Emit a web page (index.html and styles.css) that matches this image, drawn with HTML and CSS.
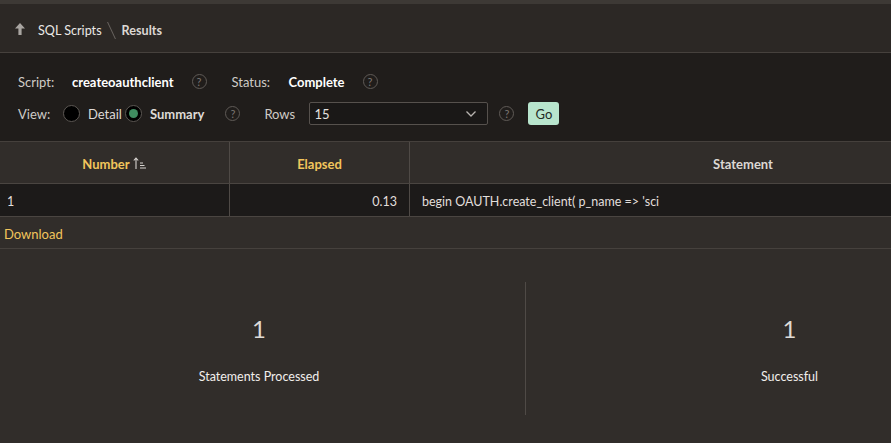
FILE: index.html
```html
<!DOCTYPE html>
<html>
<head>
<meta charset="utf-8">
<link rel="stylesheet" href="styles.css">
</head>
<body>
<div class="page">
  <div class="topstrip"></div>
  <div class="crumbs">
    <svg class="uparrow" width="12" height="14" viewBox="0 0 12 14"><path d="M6 1 L11 6.5 H7.6 V13 H4.4 V6.5 H1 Z" fill="#a9a5a1"/></svg>
    <span class="crumb">SQL Scripts</span>
    <span class="sep"></span>
    <span class="crumb current">Results</span>
  </div>
  <div class="filters">
    <div class="frow">
      <span class="lbl w-script">Script:</span>
      <span class="val">createoauthclient</span>
      <span class="help">?</span>
      <span class="lbl w-status">Status:</span>
      <span class="val">Complete</span>
      <span class="help">?</span>
    </div>
    <div class="frow">
      <span class="lbl w-view">View:</span>
      <span class="radio"></span>
      <span class="rlbl">Detail</span>
      <span class="radio on"><span class="dot"></span></span>
      <span class="rlbl bold">Summary</span>
      <span class="help">?</span>
      <span class="lbl w-rows">Rows</span>
      <span class="select"><span>15</span><svg width="12" height="8" viewBox="0 0 12 8"><path d="M1.5 1.5 L6 6 L10.5 1.5" fill="none" stroke="#b8b4b0" stroke-width="1.3"/></svg></span>
      <span class="help">?</span>
      <span class="go">Go</span>
    </div>
  </div>
  <div class="table">
    <div class="tr thead">
      <div class="td c1">Number <svg class="sort" width="14" height="14" viewBox="0 0 14 14"><path d="M3 13 V2 M0.8 4.5 L3 2 L5.2 4.5" fill="none" stroke="#d8d4d0" stroke-width="1.1"/><path d="M7 7 H10 M7 9.5 H11.5 M7 12 H13" stroke="#d8d4d0" stroke-width="1"/></svg></div>
      <div class="td c2">Elapsed</div>
      <div class="td c3 white">Statement</div>
    </div>
    <div class="tr tbody">
      <div class="td c1 left">1</div>
      <div class="td c2 right">0.13</div>
      <div class="td c3 left">begin OAUTH.create_client( p_name =&gt; 'sci</div>
    </div>
  </div>
  <div class="download"><span>Download</span></div>
  <div class="summary">
    <div class="panel">
      <div class="big">1</div>
      <div class="cap">Statements Processed</div>
    </div>
    <div class="panel divided">
      <div class="big">1</div>
      <div class="cap">Successful</div>
    </div>
  </div>
</div>
</body>
</html>
```
FILE: styles.css
```css
html, body {
  margin: 0;
  padding: 0;
  background: #312d2a;
  overflow: hidden;
}
body {
  font-family: Lato, "Open Sans", sans-serif;
  font-size: 13px;
  color: #e8e5e2;
  width: 891px;
  height: 443px;
}
.page {
  width: 891px;
  overflow: hidden;
}
.topstrip {
  height: 4px;
  background: #3d3935;
}
.crumbs {
  height: 49px;
  background: #2c2825;
  border-bottom: 1px solid #46413d;
  display: flex;
  align-items: center;
  padding-left: 14px;
  box-sizing: border-box;
  padding-top: 4px;
}
.uparrow {
  margin-right: 12px;
  margin-top: -2px;
}
.crumb {
  color: #ebe8e5;
  font-size: 12.6px;
}
.crumb.current {
  font-weight: 700;
  color: #dcd8d4;
}
.sep {
  width: 1px;
  height: 17px;
  background: #6a6561;
  transform: skewX(25deg);
  margin: 0 10px 0 9px;
}
.filters {
  height: 88px;
  background: #201d1b;
  box-sizing: border-box;
  padding: 17px 0 0 18px;
  display: flex;
  flex-direction: column;
  gap: 9px;
}
.frow {
  display: flex;
  align-items: center;
  height: 23px;
}
.lbl {
  color: #cfcbc7;
}
.w-script { width: 54px; }
.w-status { width: 57px; margin-left: 25px; }
.w-view { width: 45px; }
.w-rows { width: 45px; margin-left: 24px; }
.val {
  font-weight: 700;
  color: #ffffff;
}
.help {
  width: 13px;
  height: 13px;
  border: 1.5px solid #5f5a56;
  border-radius: 50%;
  color: #7b7672;
  font-size: 11px;
  display: inline-flex;
  align-items: center;
  justify-content: center;
  margin-left: 18px;
  line-height: 1;
}
.radio {
  width: 15px;
  height: 15px;
  border-radius: 50%;
  border: 1px solid #5c5753;
  background: #000;
  display: inline-flex;
  align-items: center;
  justify-content: center;
  margin-right: 8px;
}
.rlbl {
  color: #dedad6;
}
.radio.on {
  margin-left: 3px;
  margin-right: 8px;
}
.dot {
  width: 9px;
  height: 9px;
  border-radius: 50%;
  background: #3f8c60;
}
.bold {
  font-weight: 700;
}
.frow .bold + .help { margin-left: 21px; }
.select {
  width: 179px;
  height: 23px;
  box-sizing: border-box;
  background: #1a1817;
  border: 1px solid #56514d;
  border-radius: 2px;
  display: flex;
  align-items: center;
  justify-content: space-between;
  padding: 0 10px 0 4px;
  color: #e6e3e0;
}
.select + .help { margin-left: 11px; }
.go {
  width: 31px;
  height: 23px;
  background: #b8e5cd;
  color: #1f2a24;
  border-radius: 3px;
  display: inline-flex;
  align-items: center;
  justify-content: center;
  margin-left: 14px;
  font-size: 13px;
}
.table {
  border-top: 1px solid #45403c;
}
.tr {
  display: flex;
}
.thead {
  height: 41px;
  background: #312d2a;
  border-bottom: 1px solid #4a4541;
  font-weight: 700;
  color: #f2c55c;
}
.tbody {
  height: 32px;
  background: #1c1a19;
  border-bottom: 1px solid #4a4541;
  color: #e2dfdc;
  font-size: 12.5px;
}
.td {
  display: flex;
  align-items: center;
  justify-content: center;
  box-sizing: border-box;
  padding-top: 3px;
}
.c1 { width: 230px; border-right: 1px solid #4f4a46; }
.c2 { width: 180px; border-right: 1px solid #4f4a46; }
.c3 { width: 481px; }
.thead .c3 { padding-left: 185px; }
.white { color: #dcd8d4; }
.left { justify-content: flex-start; padding-left: 7px; }
.c3.left { padding-left: 12px; }
.right { justify-content: flex-end; padding-right: 12px; }
.sort { margin-left: 3px; margin-top: -2px; }
.download {
  height: 32px;
  border-bottom: 1px solid #46413d;
  display: flex;
  align-items: center;
  padding-left: 4px;
  padding-top: 2px;
  box-sizing: border-box;
  color: #f2c55c;
}
.summary {
  display: flex;
  padding-top: 33px;
}
.panel {
  width: 525px;
  height: 133px;
  display: flex;
  flex-direction: column;
  align-items: center;
  padding-right: 7px;
  box-sizing: border-box;
}
.divided {
  border-left: 1px solid #4f4a46;
  width: 366px;
  padding-right: 0;
  padding-left: 162px;
}
.big {
  font-size: 24px;
  font-weight: 400;
  color: #dedad6;
  margin-top: 33px;
  line-height: 28px;
}
.cap {
  margin-top: 26px;
  font-size: 12.5px;
  color: #f2efec;
}
```
